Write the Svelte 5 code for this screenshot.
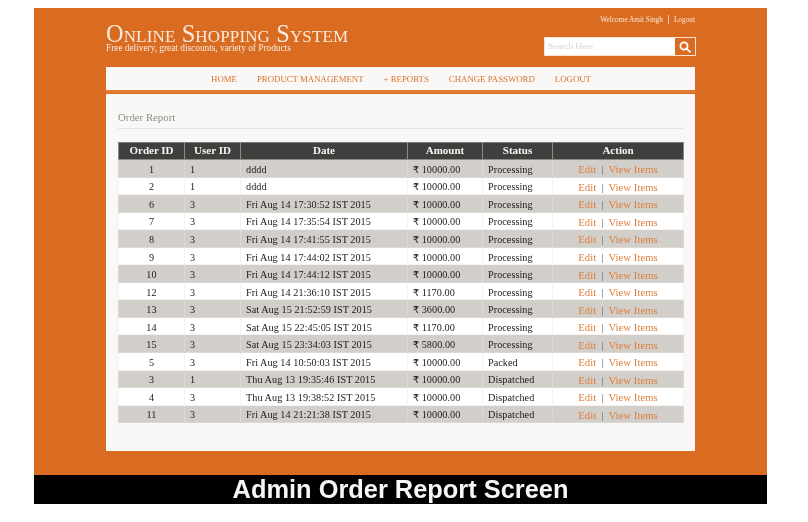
<script lang="ts">
  const NAV = ["HOME", "PRODUCT MANAGEMENT", "+ REPORTS", "CHANGE PASSWORD", "LOGOUT"];
  const COLUMNS = ["Order ID", "User ID", "Date", "Amount", "Status", "Action"];

  const ORDERS = [
    { id: 1, user: 1, date: "dddd", amount: "10000.00", status: "Processing" },
    { id: 2, user: 1, date: "dddd", amount: "10000.00", status: "Processing" },
    { id: 6, user: 3, date: "Fri Aug 14 17:30:52 IST 2015", amount: "10000.00", status: "Processing" },
    { id: 7, user: 3, date: "Fri Aug 14 17:35:54 IST 2015", amount: "10000.00", status: "Processing" },
    { id: 8, user: 3, date: "Fri Aug 14 17:41:55 IST 2015", amount: "10000.00", status: "Processing" },
    { id: 9, user: 3, date: "Fri Aug 14 17:44:02 IST 2015", amount: "10000.00", status: "Processing" },
    { id: 10, user: 3, date: "Fri Aug 14 17:44:12 IST 2015", amount: "10000.00", status: "Processing" },
    { id: 12, user: 3, date: "Fri Aug 14 21:36:10 IST 2015", amount: "1170.00", status: "Processing" },
    { id: 13, user: 3, date: "Sat Aug 15 21:52:59 IST 2015", amount: "3600.00", status: "Processing" },
    { id: 14, user: 3, date: "Sat Aug 15 22:45:05 IST 2015", amount: "1170.00", status: "Processing" },
    { id: 15, user: 3, date: "Sat Aug 15 23:34:03 IST 2015", amount: "5800.00", status: "Processing" },
    { id: 5, user: 3, date: "Fri Aug 14 10:50:03 IST 2015", amount: "10000.00", status: "Packed" },
    { id: 3, user: 1, date: "Thu Aug 13 19:35:46 IST 2015", amount: "10000.00", status: "Dispatched" },
    { id: 4, user: 3, date: "Thu Aug 13 19:38:52 IST 2015", amount: "10000.00", status: "Dispatched" },
    { id: 11, user: 3, date: "Fri Aug 14 21:21:38 IST 2015", amount: "10000.00", status: "Dispatched" },
  ];
</script>

<div class="page">
  <div class="shell">
    <header class="top">
      <div class="brand">
        <h1>Online Shopping System</h1>
        <p>Free delivery, great discounts, variety of Products</p>
      </div>
      <div class="top-right">
        <div class="welcome">
          <span>Welcome Amit Singh</span>
          <span class="sep"></span>
          <span>Logout</span>
        </div>
        <div class="search">
          <span class="search-input">Search Here</span>
          <span class="search-btn">
            <svg width="12" height="12" viewBox="0 0 12 12" fill="none" stroke="#fff" stroke-width="1.7">
              <circle cx="5" cy="5" r="3.6" />
              <path d="M7.7 7.7 11 11" stroke-linecap="round" />
            </svg>
          </span>
        </div>
      </div>
    </header>

    <nav class="nav">
      {#each NAV as item}
        <span>{item}</span>
      {/each}
    </nav>

    <main class="panel">
      <h2>Order Report</h2>
      <table>
        <colgroup>
          <col style="width: 66px" />
          <col style="width: 56px" />
          <col style="width: 167px" />
          <col style="width: 75px" />
          <col style="width: 70px" />
          <col style="width: 131px" />
        </colgroup>
        <thead>
          <tr>
            {#each COLUMNS as col}
              <th>{col}</th>
            {/each}
          </tr>
        </thead>
        <tbody>
          {#each ORDERS as order}
            <tr>
              <td class="center">{order.id}</td>
              <td>{order.user}</td>
              <td>{order.date}</td>
              <td><span class="rupee">₹</span> {order.amount}</td>
              <td>{order.status}</td>
              <td class="center actions">
                <span>Edit</span><span class="pipe">|</span><span>View Items</span>
              </td>
            </tr>
          {/each}
        </tbody>
      </table>
    </main>
  </div>

  <footer class="caption">Admin Order Report Screen</footer>
</div>

<style>
  :global(body) {
    background: #fff;
  }

  .page {
    width: 733px;
    margin-left: 34px;
    padding-top: 8px;
    font-family: "Liberation Serif", serif;
    filter: blur(0.35px);
  }

  .shell {
    height: 467px;
    box-sizing: border-box;
    background: #d96c21;
    padding: 0 72px;
  }

  .top {
    display: flex;
    justify-content: space-between;
    height: 59px;
  }

  .brand {
    padding-top: 17px;
    color: #f9ebdf;
  }

  h1 {
    margin: 0;
    font-size: 24.3px;
    font-weight: 400;
    line-height: 17px;
    font-variant: small-caps;
    letter-spacing: 0.15px;
    white-space: nowrap;
  }

  .brand p {
    margin: 1px 0 0;
    font-size: 9.3px;
    line-height: 10px;
    white-space: nowrap;
  }

  .top-right {
    display: flex;
    flex-direction: column;
    align-items: flex-end;
    padding-top: 6px;
  }

  .welcome {
    display: flex;
    align-items: center;
    gap: 5px;
    font-size: 7.3px;
    line-height: 11px;
    color: #fae6d6;
  }

  .sep {
    width: 1px;
    height: 9px;
    background: #f2c9aa;
  }

  .search {
    display: flex;
    width: 152px;
    height: 19px;
    box-sizing: border-box;
    margin-top: 12px;
    margin-right: -1px;
    border: 1px solid #f7e3d3;
    background: #fff;
  }

  .search-input {
    flex: 1;
    padding-left: 3px;
    font-size: 9.2px;
    line-height: 16px;
    color: #d4d4d4;
  }

  .search-btn {
    display: flex;
    align-items: center;
    justify-content: center;
    width: 20px;
    background: #d96c21;
  }

  .nav {
    display: flex;
    justify-content: center;
    gap: 20px;
    height: 26px;
    box-sizing: border-box;
    padding-left: 1px;
    background: #f9f8f6;
    border-bottom: 3px solid #e07a30;
    font-size: 8.8px;
    line-height: 25px;
    color: #d9722c;
  }

  .panel {
    box-sizing: border-box;
    height: 357px;
    margin-top: 1px;
    padding: 17px 12px 0;
    background: #f9f8f6;
  }

  h2 {
    margin: 0 0 13px;
    padding-bottom: 4px;
    border-bottom: 1px solid #e6e4e1;
    font-size: 10.8px;
    font-weight: 400;
    line-height: 13px;
    color: #8f8d89;
  }

  table {
    width: 565px;
    table-layout: fixed;
    border-collapse: collapse;
    font-size: 10.2px;
    color: #1a1a1a;
  }

  th {
    box-sizing: border-box;
    height: 17px;
    padding: 0 0 2px;
    background: #3f403e;
    border: 1px solid #8a8a86;
    border-top-color: #777;
    color: #f7f6f3;
    font-size: 11px;
    font-weight: 700;
  }

  td {
    box-sizing: border-box;
    height: 17.55px;
    padding: 2px 0 0 5px;
    border: 1px solid #f4f3f1;
    white-space: nowrap;
    background: #fff;
    letter-spacing: 0.05px;
  }

  tbody tr:nth-child(odd) td {
    background: #d2cfca;
    border-color: #dbd9d5;
  }

  td.center {
    padding: 2px 0 0;
    text-align: center;
  }

  .rupee {
    font-family: "DejaVu Sans", sans-serif;
    font-size: 9.5px;
  }

  .actions {
    font-size: 10.7px;
    color: #dd7f3a;
  }

  .pipe {
    margin: 0 5px;
    color: #5f6872;
  }

  .caption {
    height: 29px;
    background: #000;
    color: #f6f6f6;
    font-family: "Liberation Sans", sans-serif;
    font-size: 25.4px;
    font-weight: 700;
    line-height: 29px;
    text-align: center;
  }
</style>
